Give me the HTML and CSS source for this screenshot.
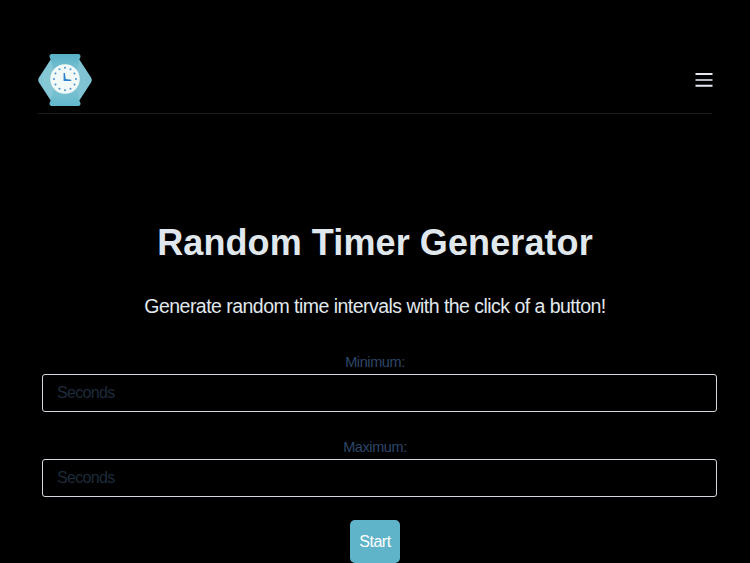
FILE: index.html
```html
<!DOCTYPE html>
<html lang="en">
<head>
    <meta charset="UTF-8">
    <meta name="viewport" content="width=device-width, initial-scale=1.0">
    <title>Random Timer Generator</title>
    <link rel="stylesheet" href="styles.css">
</head>
<body>
    <header class="header">
        <a href="#" class="logo" aria-label="Home">
            <svg width="56" height="54" viewBox="0 0 56 54">
                <defs>
                    <linearGradient id="strap" x1="0" y1="0" x2="0" y2="1">
                        <stop offset="0" stop-color="#58b0c6"/>
                        <stop offset="0.5" stop-color="#8bcad7"/>
                        <stop offset="1" stop-color="#62b7cb"/>
                    </linearGradient>
                </defs>
                <path d="M14 6L2 24.500q-1.500 2.500 0 5L14 48h28l12-18.500q1.500-2.500 0-5L42 6z" fill="#7dc3d2"/>
                <path d="M14 1h28q2 1 1.500 3L42 7v40l1.500 3q.5 2-1.500 3H14q-2-1-1.500-3l1.500-3V7l-1.500-3Q12 2 14 1z" fill="url(#strap)"/>
                <path d="M14 8L3 25q-1 2 0 4l11 17 5-19z" fill="#85c7d5"/>
                <path d="M42 8l11 17q1 2 0 4L42 46l-5-19z" fill="#80c4d3"/>
                <circle cx="28" cy="26" r="14.700" fill="#f2faf7"/>
                <g fill="#4c91d8">
                    <circle cx="28" cy="14.800" r="1"/>
                    <circle cx="33.500" cy="16.300" r="1"/>
                    <circle cx="37.500" cy="20.500" r="1"/>
                    <circle cx="39" cy="26" r="1"/>
                    <circle cx="37.500" cy="31.500" r="1"/>
                    <circle cx="33.500" cy="35.700" r="1"/>
                    <circle cx="28" cy="37.200" r="1"/>
                    <circle cx="22.500" cy="35.700" r="1"/>
                    <circle cx="18.500" cy="31.500" r="1"/>
                    <circle cx="17" cy="26" r="1"/>
                    <circle cx="18.500" cy="20.500" r="1"/>
                    <circle cx="22.500" cy="16.300" r="1"/>
                </g>
                <path d="M26.600 20h1.300l.8 6 5.500.8v1.200h-7.600z" fill="#2f7fd3"/>
            </svg>
        </a>
        <button class="menu_bt" aria-label="Menu">
            <svg width="18" height="16" viewBox="0 0 18 16">
                <path d="M.5 2h17M.5 13.800h17" stroke="#e4ebf0" stroke-width="2"/>
                <path d="M.5 8h17" stroke="#b0b6bb" stroke-width="2"/>
            </svg>
        </button>
    </header>

    <main class="content">
        <h1>Random Timer Generator</h1>
        <p class="intro">Generate random time intervals with the click of a button!</p>
        <form>
            <label for="min">Minimum:</label>
            <input type="text" id="min" class="seconds" placeholder="Seconds">
            <label for="max">Maximum:</label>
            <input type="text" id="max" class="seconds" placeholder="Seconds">
            <button type="button" class="start_bt">Start</button>
        </form>
    </main>
</body>
</html>
```
FILE: styles.css
```css
* {
    box-sizing: border-box;
    margin: 0;
    padding: 0;
}
body {
    background: #000;
    color: #e1e8ed;
    font-family: "Liberation Sans", Helvetica, Arial, sans-serif;
    height: 563px;
    overflow: hidden;
}
.header {
    display: flex;
    justify-content: space-between;
    height: 61px;
    margin: 53px 38px 0;
    border-bottom: 1px solid #1c1c1c;
}
.logo {
    display: block;
    height: 54px;
    margin-left: -1px;
}
.menu_bt {
    height: 16px;
    margin: 19px -1px 0 0;
    background: none;
    border: none;
}
.menu_bt svg {
    display: block;
}
.content {
    padding: 106px 33px 0 42px;
    text-align: center;
}
h1 {
    margin-left: -9px;
    font-size: 36px;
    line-height: 46px;
    letter-spacing: 0.1px;
}
.intro {
    margin: 25px 0 0 -9px;
    font-size: 19.5px;
    line-height: 30px;
    letter-spacing: -0.53px;
}
form {
    display: flex;
    flex-direction: column;
    align-items: center;
    padding-top: 30px;
}
label {
    margin-left: -9px;
    color: #2d4668;
    font-size: 14.5px;
    line-height: 22px;
    letter-spacing: -0.4px;
}
.seconds {
    width: 675px;
    height: 38px;
    margin: 1px 0 24px;
    padding: 0 14px;
    background: #000;
    color: #e1e8ed;
    border: 1px solid #d3d8df;
    border-radius: 3px;
    font-family: inherit;
    font-size: 16px;
    letter-spacing: -0.65px;
}
.seconds::placeholder {
    color: #1d2b3a;
}
.start_bt {
    width: 50px;
    height: 43px;
    margin: -1px 0 0 -9px;
    background: #5fb4c9;
    color: #fff;
    border: none;
    border-radius: 5px;
    font-family: inherit;
    font-size: 16px;
    letter-spacing: -0.5px;
}
```
